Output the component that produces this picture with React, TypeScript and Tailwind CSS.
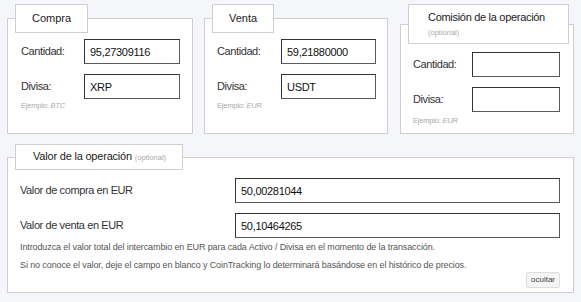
import React from 'react';

type FieldProps = {
  title: string;
  optional?: boolean;
  cantidad: string;
  divisa: string;
  ejemplo: string;
  className: string;
  bodyClass: string;
};

const inputCls =
  'h-[25px] w-full border border-[#5a5a5a] border-t-[#333] border-l-[#333] bg-white px-[5px] text-[11px] tracking-[-0.3px] text-[#111] outline-none';

const labelCls = 'whitespace-nowrap text-[11px] tracking-[-0.4px] text-[#333]';

const Panel: React.FC<FieldProps> = ({ title, optional, cantidad, divisa, ejemplo, className, bodyClass }) => (
  <fieldset className={`flex flex-col border border-[#cfcfcf] bg-white ${className}`}>
    <legend className="ml-[7px] border border-[#cfcfcf] bg-white">
      {optional ? (
        <div className="whitespace-nowrap pl-[19px] pr-[23px] pt-[5px] pb-[5px]">
          <div className="text-[11px] leading-[14px] tracking-[-0.3px] text-[#222]">{title}</div>
          <div className="mt-[4px] text-[7.5px] leading-[10px] text-[#aaa]">(optional)</div>
        </div>
      ) : (
        <div className="px-4 py-[7px] text-[11px] leading-[13px] text-[#222]">{title}</div>
      )}
    </legend>
    <div className={`grid items-center gap-y-[10px] ${bodyClass}`}>
      <label className={labelCls}>Cantidad:</label>
      <input className={inputCls} defaultValue={cantidad} />
      <label className={labelCls}>Divisa:</label>
      <input className={inputCls} defaultValue={divisa} />
    </div>
    <div className={`-mt-[4px] text-[7.5px] leading-[10px] tracking-[-0.2px] text-[#aaa] ${bodyClass}`}>
      Ejemplo: <i>{ejemplo}</i>
    </div>
  </fieldset>
);

const App: React.FC = () => {
  return (
    <div className="h-[302px] w-[581px] bg-[#f4f6f9] pl-[7px] pt-[4px] font-['Liberation_Sans',Arial,sans-serif]">
      <div className="flex h-[130px] items-stretch">
        <Panel
          title="Compra"
          cantidad="95,27309116"
          divisa="XRP"
          ejemplo="BTC"
          className="w-[186px]"
          bodyClass="grid-cols-[63px_96px] pl-[13px] pt-[6px]"
        />
        <Panel
          title="Venta"
          cantidad="59,21880000"
          divisa="USDT"
          ejemplo="EUR"
          className="ml-[11px] w-[184px]"
          bodyClass="grid-cols-[64px_95px] pl-[12px] pt-[6px]"
        />
        <Panel
          title="Comisión de la operación"
          optional
          cantidad=""
          divisa=""
          ejemplo="EUR"
          className="ml-[12px] w-[174px]"
          bodyClass="grid-cols-[59px_88px] pl-[12px] pt-[8px]"
        />
      </div>

      <fieldset className="mt-[10px] w-[567px] border border-[#cfcfcf] bg-white">
        <legend className="ml-[7px] whitespace-nowrap border border-[#cfcfcf] bg-white pl-[17px] pr-[16px] py-[5px] text-[11px] leading-[12px] tracking-[-0.2px] text-[#222]">
          Valor de la operación <span className="text-[7.5px] tracking-normal text-[#aaa]">(optional)</span>
        </legend>
        <div className="pl-[12px] pr-[13px] pt-[8px] pb-[4px]">
          <div className="grid grid-cols-[215px_1fr] items-center gap-y-[10px]">
            <label className={labelCls}>Valor de compra en EUR</label>
            <input className={inputCls} defaultValue="50,00281044" />
            <label className={labelCls}>Valor de venta en EUR</label>
            <input className={inputCls} defaultValue="50,10464265" />
          </div>
          <p className="text-[9px] leading-[18px] tracking-[-0.11px] text-[#555]">
            Introduzca el valor total del intercambio en EUR para cada Activo / Divisa en el momento de la transacción.
            <br />
            Si no conoce el valor, deje el campo en blanco y CoinTracking lo determinará basándose en el histórico de precios.
          </p>
          <div className="-mt-[2px] flex justify-end">
            <button className="h-[16px] rounded-[2px] border border-[#ddd] bg-[#f5f5f5] px-[4px] text-[8px] leading-[14px] text-[#444]">
              ocultar
            </button>
          </div>
        </div>
      </fieldset>
    </div>
  );
};

export default App;
